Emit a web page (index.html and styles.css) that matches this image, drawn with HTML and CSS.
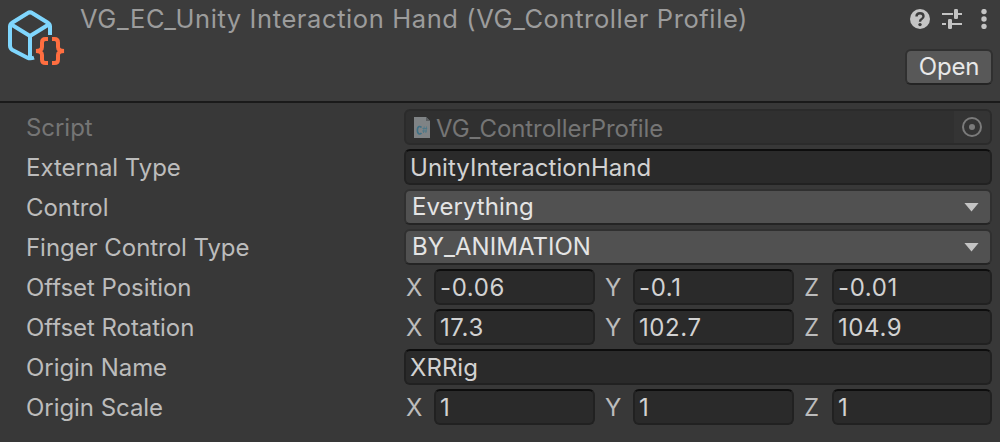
FILE: index.html
```
<!DOCTYPE html>
<html lang="en">
<head>
<meta charset="utf-8">
<title>Inspector</title>
<link rel="stylesheet" href="styles.css">
</head>
<body>
<main class="inspector">
  <header class="header">
    <svg class="asset-icon" viewBox="0 0 60 62" fill="none">
      <g stroke="#7fd6fd" stroke-width="4" stroke-linejoin="round">
        <path d="M42 26V17.500Q42 15 39.500 13.500L24.500 4.200Q22 2.500 19.500 4.200L4.500 13.500Q2 15 2 17.500V36.500Q2 39.500 4.500 41L19.500 48.700Q22 50 26 48.700"/>
        <path d="M2.500 15L22 27L41.500 15M22 27V49"/>
      </g>
      <path d="M40 30H37.500Q34 30 34 33.500V38Q34 41.800 28 42Q34 42.200 34 46V50.500Q34 54 37.500 54H40M44 30H46.500Q50 30 50 33.500V38Q50 41.800 56 42Q50 42.200 50 46V50.500Q50 54 46.500 54H44" stroke="#ff6e40" stroke-width="4"/>
    </svg>
    <h1 class="title">VG_EC_Unity Interaction Hand (VG_Controller Profile)</h1>
    <div class="actions">
      <div class="tools">
        <svg width="20" height="20" viewBox="0 0 20 20"><circle cx="10" cy="10" r="10" fill="#c4c4c4"/><path d="M6.500 7.500Q6.500 4.200 10 4.200T13.500 7.300Q13.500 9 11.700 10Q10 10.800 10 12.700" fill="none" stroke="#3c3c3c" stroke-width="2.400"/><circle cx="10" cy="15.600" r="1.700" fill="#3c3c3c"/></svg>
        <svg width="20" height="20" viewBox="0 0 20 20" fill="#c4c4c4"><path d="M0 4h11v2H0zM16 4h4v2h-4zM0 14h4v2H0zM9 14h11v2H9z"/><rect x="12" width="4" height="10" rx="1.200"/><rect x="6" y="10" width="4" height="10" rx="1.200"/></svg>
        <svg width="6" height="20" viewBox="0 0 6 20" fill="#c4c4c4"><circle cx="3" cy="2.600" r="2.700"/><circle cx="3" cy="10" r="2.700"/><circle cx="3" cy="17.400" r="2.700"/></svg>
      </div>
      <button class="open">Open</button>
    </div>
  </header>
  <section class="properties">
    <div class="row disabled">
      <span class="label">Script</span>
      <div class="field object">
        <svg class="file-icon" width="16" height="21" viewBox="0 0 16 21"><path d="M0 0H12L16 4V21H0z" fill="#7f8385"/><path d="M12 0V4H16z" fill="#5b5e60"/><path d="M7.500 10.500Q6.500 9.300 5.200 9.500Q3.400 10 3.400 13.300T5.200 17Q6.500 17.300 7.500 16" fill="none" stroke="#3e7085" stroke-width="1.600"/><path d="M10.200 9.500L9.500 16M12.500 9.500L11.800 16M8.500 11.500H13.200M8.200 14H13" stroke="#4c7889" stroke-width=".9"/></svg>
        <span class="value">VG_ControllerProfile</span>
        <span class="picker"><svg width="20" height="20" viewBox="0 0 20 20"><circle cx="10" cy="10" r="9" fill="none" stroke="#7b7b7b" stroke-width="2"/><circle cx="10" cy="10" r="3" fill="#7b7b7b"/></svg></span>
      </div>
    </div>
    <div class="row"><span class="label">External Type</span><div class="field"><span class="value">UnityInteractionHand</span></div></div>
    <div class="row"><span class="label">Control</span><div class="field dropdown"><span class="value">Everything</span><i class="arrow"></i></div></div>
    <div class="row"><span class="label">Finger Control Type</span><div class="field dropdown"><span class="value">BY_ANIMATION</span><i class="arrow"></i></div></div>
    <div class="row"><span class="label">Offset Position</span>
      <div class="vector"><span class="axis">X</span><div class="field num">-0.06</div><span class="axis">Y</span><div class="field num">-0.1</div><span class="axis">Z</span><div class="field num">-0.01</div></div></div>
    <div class="row"><span class="label">Offset Rotation</span>
      <div class="vector"><span class="axis">X</span><div class="field num">17.3</div><span class="axis">Y</span><div class="field num">102.7</div><span class="axis">Z</span><div class="field num">104.9</div></div></div>
    <div class="row"><span class="label">Origin Name</span><div class="field"><span class="value">XRRig</span></div></div>
    <div class="row"><span class="label">Origin Scale</span>
      <div class="vector"><span class="axis">X</span><div class="field num">1</div><span class="axis">Y</span><div class="field num">1</div><span class="axis">Z</span><div class="field num">1</div></div></div>
  </section>
</main>
</body>
</html>
```
FILE: styles.css
```
* { box-sizing: border-box; }
body {
  margin: 0;
  background: #383838;
  color: #d2d2d2;
  font: 400 24px/32px Inter, "Liberation Sans", sans-serif;
  letter-spacing: 0.03px;
  overflow: hidden;
}
.inspector { width: 1000px; height: 442px; }
.header {
  display: flex;
  height: 103px;
  padding: 3px 8px 0;
  background: #3c3c3c;
  border-bottom: 2px solid #1a1a1a;
}
.asset-icon { flex: none; width: 60px; height: 62px; margin-top: 6px; }
.title {
  flex: 1;
  margin: 0 0 0 12px;
  font-size: 25.5px;
  font-weight: 400;
  line-height: 32px;
  letter-spacing: 0.6px;
  color: #9c9c9c;
  white-space: nowrap;
}
.actions { display: flex; flex-direction: column; align-items: flex-end; }
.tools { display: flex; gap: 12px; height: 20px; margin: 6px 5px 20px 0; }
.tools svg:last-child { margin-left: 7px; }
.open {
  width: 88px;
  height: 36px;
  margin-right: -1px;
  padding: 0;
  border: 2px solid #303030;
  border-bottom-color: #242424;
  border-radius: 6px;
  background: #585858;
  color: #e8e8e8;
  font: inherit;
  letter-spacing: -0.2px;
  line-height: 30px;
}
.properties { display: grid; gap: 4px; padding: 6px 8px 0 26px; }
.row { display: grid; grid-template-columns: 378px 588px; height: 36px; }
.label { line-height: 38px; color: #bcbcbc; letter-spacing: -0.05px; white-space: nowrap; }
.field {
  display: flex;
  align-items: center;
  height: 36px;
  padding: 1px 0 0 4px;
  border: 2px solid #212121;
  border-top-color: #0d0d0d;
  border-radius: 6px;
  background: #2a2a2a;
  white-space: nowrap;
}
.object { padding-left: 8px; border-color: #2b2b2b; background: #303030; }
.disabled .label, .disabled .value { color: #757575; }
.object .value { margin-top: 2px; letter-spacing: -0.07px; }
.file-icon { margin-right: 6px; }
.picker {
  display: grid;
  place-items: center;
  width: 36px;
  height: 32px;
  margin: -1px 0 0 auto;
  background: #343434;
  border-radius: 0 4px 4px 0;
}
.dropdown {
  padding: 0 8px 1px 6px;
  border-color: #303030;
  border-bottom-color: #242424;
  background: #515151;
  color: #e4e4e4;
}
.arrow {
  width: 15px;
  height: 9px;
  margin-left: auto;
  margin-top: 1px;
  margin-right: 3px;
  background: #c4c4c4;
  clip-path: polygon(0 0, 100% 0, 50% 100%);
}
.vector { display: grid; grid-template-columns: 30px 161px 38px 161px 38px 160px; }
.axis { line-height: 38px; padding-left: 10px; color: #bcbcbc; }
.axis:first-child { padding-left: 2px; }
.num { padding-left: 4px; letter-spacing: 0.6px; }
```
